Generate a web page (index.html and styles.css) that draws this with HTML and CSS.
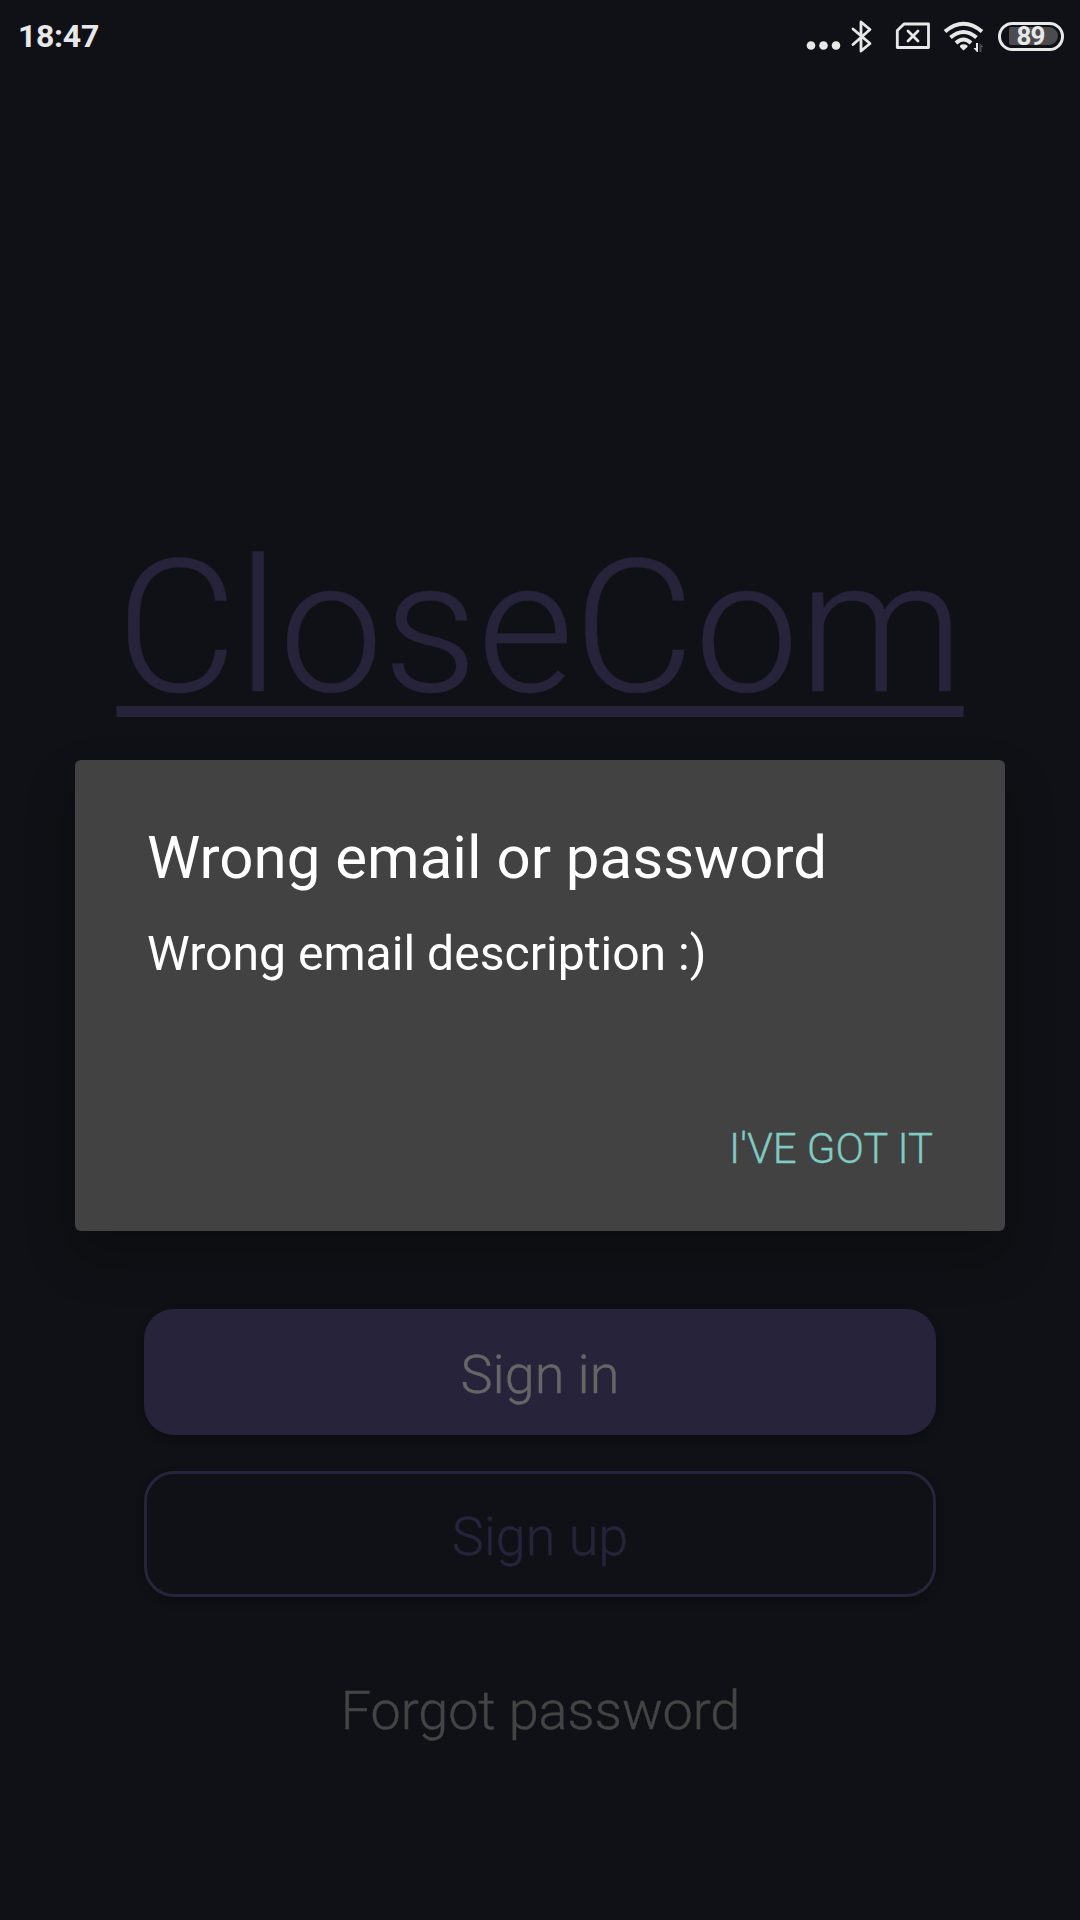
FILE: index.html
```html
<!DOCTYPE html>
<html lang="en">
<head>
<meta charset="utf-8">
<title>CloseCom</title>
<link rel="stylesheet" href="styles.css">
</head>
<body>
<header class="status">
  <span class="clock">18:47</span>
  <svg class="status-icons" width="198" height="72" viewBox="800 0 198 72" fill="none" stroke="#e8e8e8">
    <g fill="#e8e8e8" stroke="none"><circle cx="811" cy="45.500" r="4.300"/><circle cx="823.500" cy="45.500" r="4.300"/><circle cx="836" cy="45.500" r="4.300"/></g>
    <path stroke-width="2.800" stroke-linejoin="round" stroke-linecap="round" d="M853 29L870 43.500L861 51V22L870 29.500L853 44.500"/>
    <path stroke-width="2.800" stroke-linejoin="round" d="M904 24H928.500V47.500H897.300V30.500Z"/>
    <path stroke-width="2.800" stroke-linecap="round" d="M908 31L918 41M918 31L908 41"/>
    <path stroke-width="4" d="M945 31.500Q963.500 16 982 31.500M950.500 37.500Q963.500 26.500 976.500 37.500M956 43Q963.500 36 971 43"/>
    <path fill="#e8e8e8" stroke="none" d="M960 45.500Q963.500 43 967.500 45.500V47L963.500 50.500L960 47Z"/>
    <path fill="#e8e8e8" stroke="none" d="M976 43H978V52H977L973.500 48H976Z"/>
    <path fill="#4c4c50" stroke="none" d="M979.500 52V43L983.500 47H981.500V52Z"/>
  </svg>
  <span class="battery"><span class="charge">89</span></span>
</header>
<main class="login">
  <h1 class="brand"><span>CloseCom</span></h1>
  <section class="dialog" role="alertdialog">
    <h2 class="dialog-title">Wrong email or password</h2>
    <p class="dialog-text">Wrong email description :)</p>
    <button class="dialog-action">I'VE GOT IT</button>
  </section>
  <button class="button primary">Sign in</button>
  <button class="button outline">Sign up</button>
  <a class="forgot">Forgot password</a>
</main>
</body>
</html>
```
FILE: styles.css
```css
* { box-sizing: border-box; }
body { margin: 0; width: 1080px; height: 1920px; overflow: hidden; background: #101116; color: #fff; font-family: Roboto, sans-serif; }
h1, h2, p { margin: 0; font-weight: 400; }
button { border: 0; padding: 0; background: none; font-family: inherit; }
.status { height: 72px; display: flex; align-items: center; padding: 0 16px 0 18px; }
.clock { font-size: 32px; letter-spacing: -0.3px; font-weight: 700; color: #e8e8e8; margin-right: auto; }
.status-icons { display: block; }
.battery { width: 66px; height: 29px; border: 3px solid #e8e8e8; border-radius: 15px; display: flex; align-items: center; justify-content: flex-end; padding-right: 3px; }
.charge { width: 49px; height: 18px; padding-right: 6px; border-radius: 2px 9px 9px 2px; background: #4c4c50; color: #e8e8e8; font-size: 26px; line-height: 19px; letter-spacing: -0.8px; font-weight: 700; text-align: center; }
.login { display: flex; flex-direction: column; align-items: center; padding-top: 445px; }
.brand { height: 243px; font-size: 186px; line-height: 220px; font-weight: 300; color: #27233b; }
.brand span { text-decoration: underline; text-decoration-thickness: 11px; text-underline-offset: 15px; text-decoration-skip-ink: none; -webkit-text-stroke: 0.5px; }
.dialog { width: 930px; height: 471px; background: #424242; border-radius: 6px; box-shadow: 0 25px 50px rgba(0,0,0,.24); padding: 62px 72px 0; display: flex; flex-direction: column; }
.dialog-title { font-size: 60px; line-height: 72px; }
.dialog-text { font-size: 48.1px; line-height: 60px; margin-top: 30px; }
.dialog-action { align-self: flex-end; margin-top: 135px; font-size: 42px; line-height: 60px; font-weight: 300; letter-spacing: -0.1px; color: #80cbc4; -webkit-text-stroke: 0.3px; }
.button { width: 792px; height: 126px; padding-top: 4px; border-radius: 30px; font-size: 54px; font-weight: 300; margin-top: 78px; box-shadow: 0 4px 8px rgba(0,0,0,.25); -webkit-text-stroke: 0.4px; }
.primary { background: #27233b; color: #666; }
.outline { border: 3px solid #27233b; background: #101116; color: #27233b; margin-top: 36px; }
.forgot { font-size: 54px; line-height: 64px; margin-top: 82px; padding-left: 1px; font-weight: 300; letter-spacing: -0.1px; color: #444; -webkit-text-stroke: 0.4px; }
```
